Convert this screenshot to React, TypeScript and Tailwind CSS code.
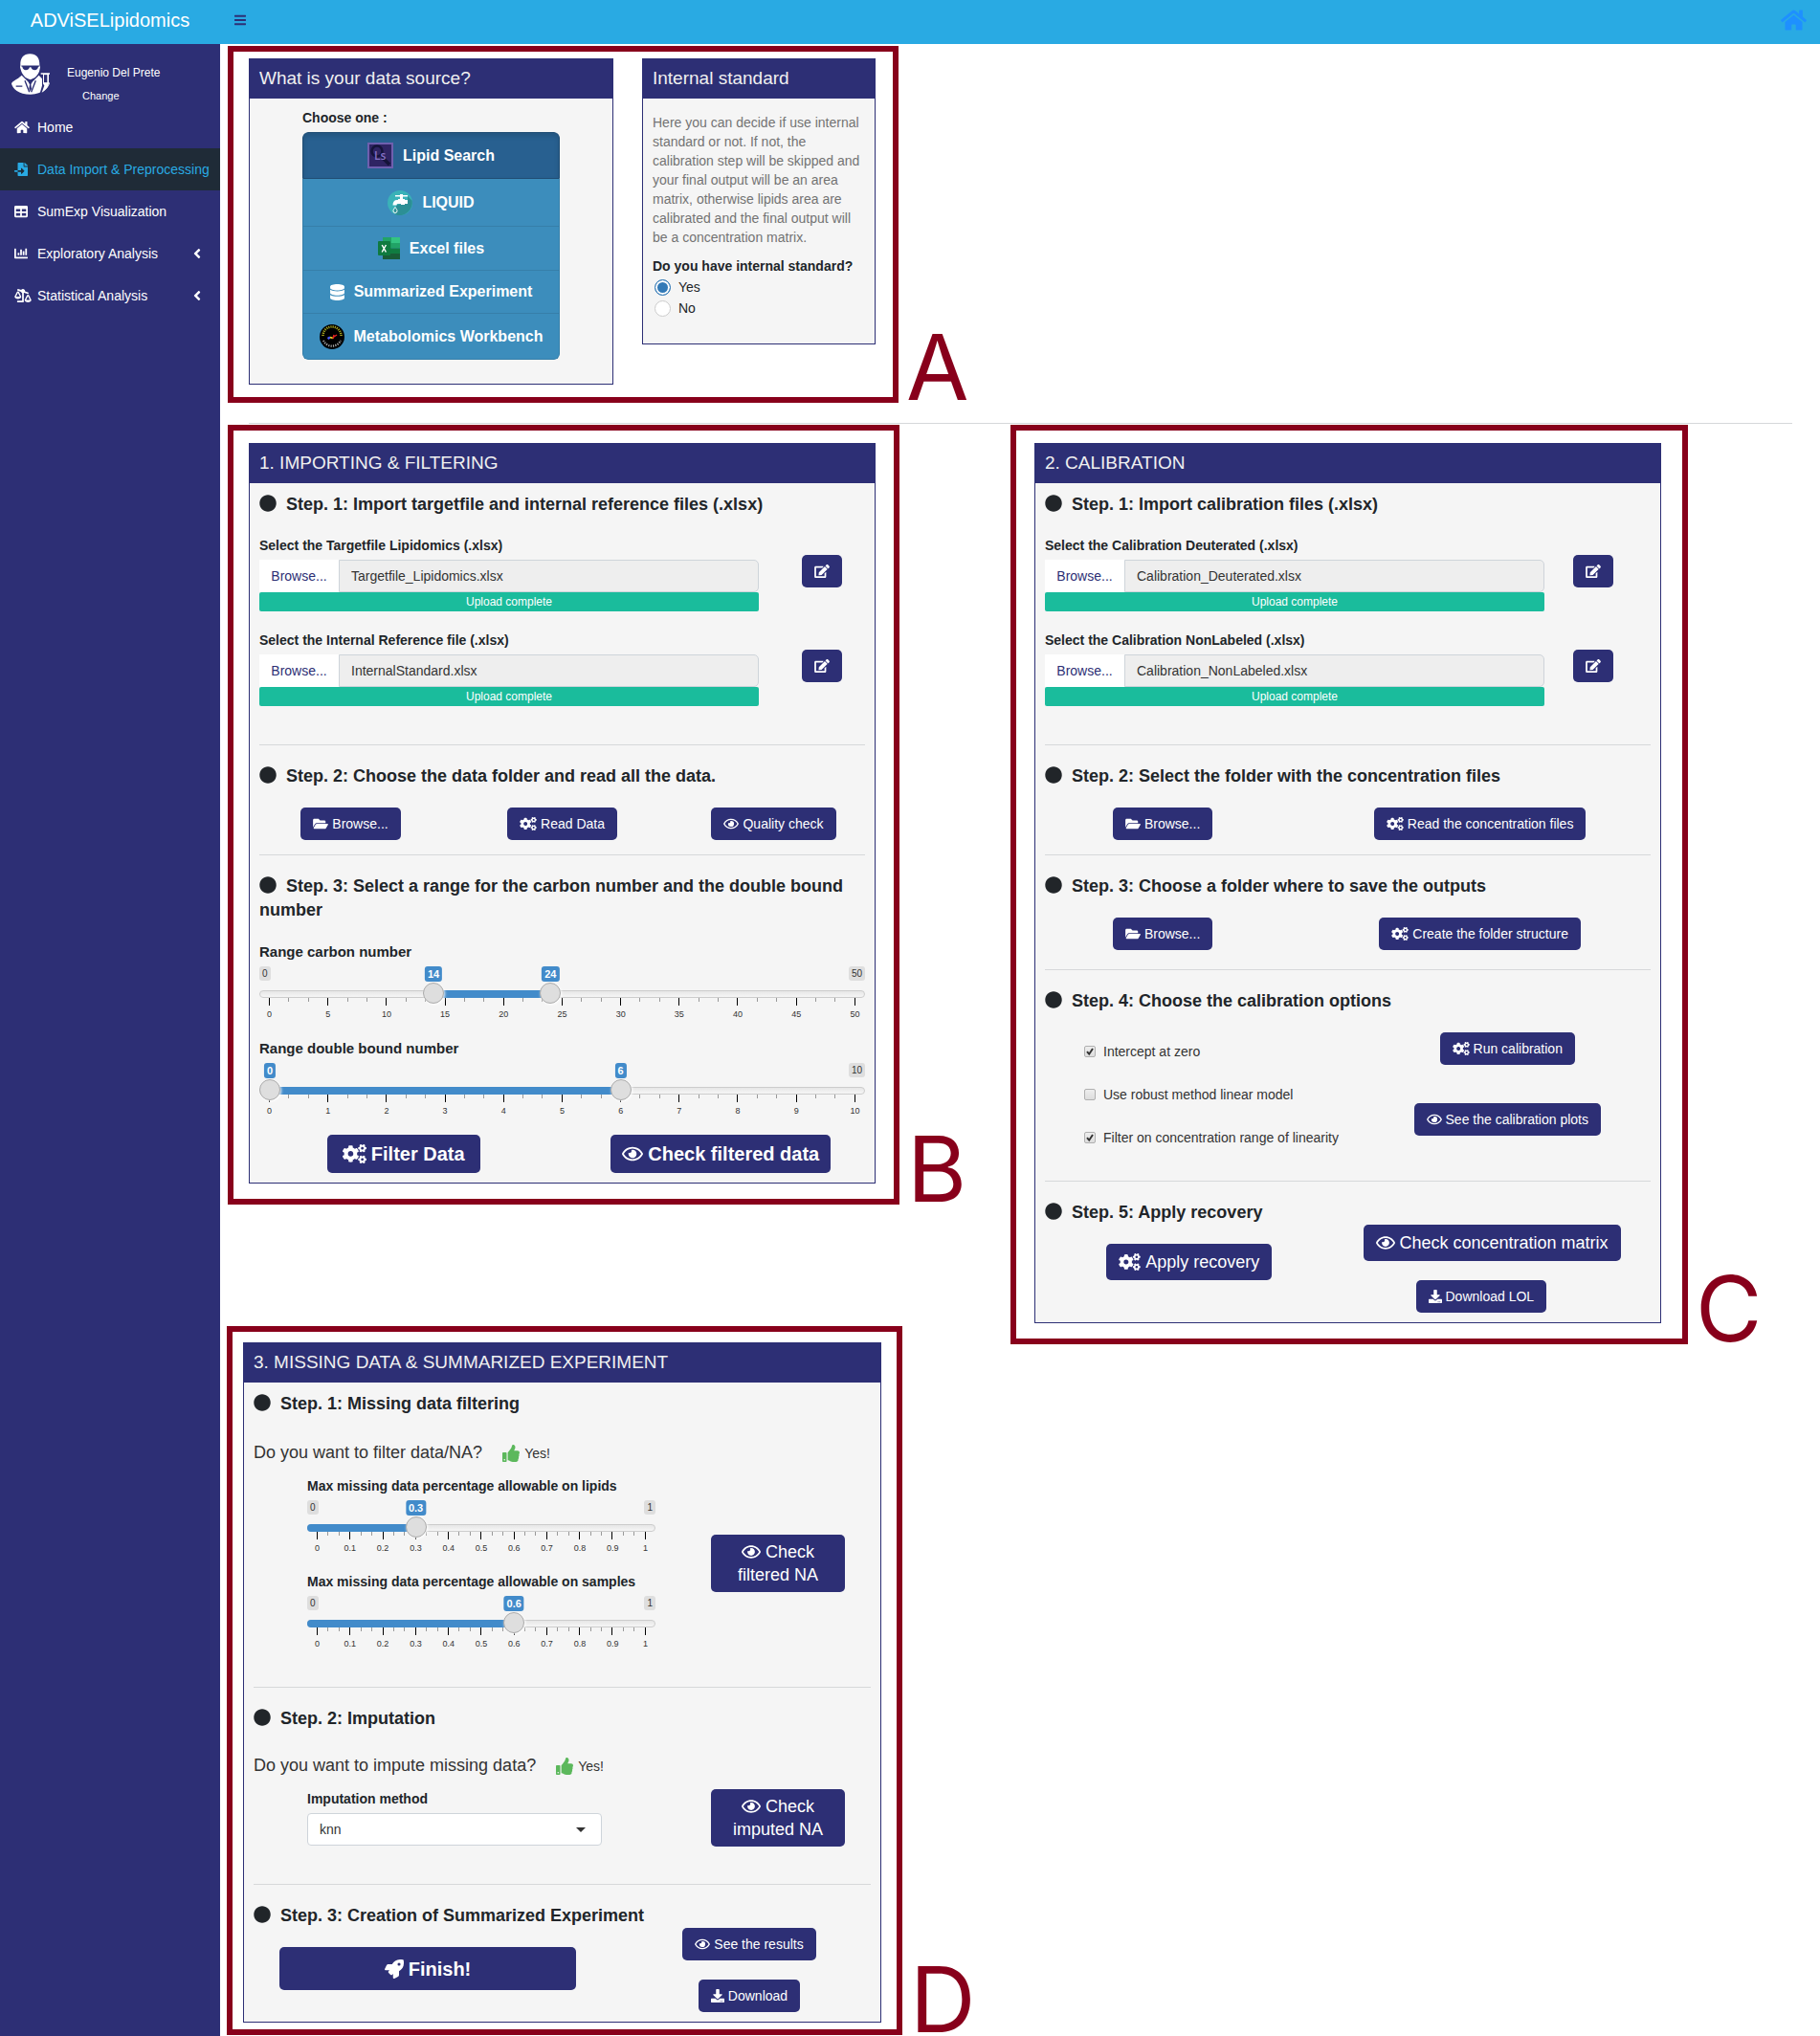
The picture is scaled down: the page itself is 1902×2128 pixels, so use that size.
import React, { useId, useState } from "react";
import {
  FaAngleLeft,
  FaBalanceScaleRight,
  FaBars,
  FaChartBar,
  FaCircle,
  FaCogs,
  FaDatabase,
  FaDownload,
  FaEdit,
  FaFileImport,
  FaFolderOpen,
  FaHome,
  FaRegEye,
  FaRocket,
  FaTable,
  FaThumbsUp,
} from "react-icons/fa";

type Icon = React.ComponentType<{ className?: string }>;

/* ---------- Shell ---------- */

function Avatar() {
  return (
    <svg viewBox="0 0 120 128" className="h-[43px] w-10 shrink-0" aria-hidden="true">
      <path
        fill="#fff"
        d="M28 36C27 12 38 0 58 0s31 12 30 36l2 6-3 14c-4 10-12 22-28 25C43 78 35 66 31 56l-4-14z"
      />
      <path fill="#2d2f75" d="M31 37h56v3l-3 1c-1 7-5 10-11 10s-10-4-12-9h-4c-2 5-6 9-12 9s-10-3-11-10l-3-1z" />
      <path
        fill="#fff"
        d="M32 68l24 24h6l24-24 10 10 24 14c-4 16-22 34-60 36C22 128 3 108 0 94c2-8 18-12 32-26z"
      />
      <path stroke="#2d2f75" strokeWidth="4" fill="none" d="M42 84l14 36M76 84l-14 36M14 102h20" />
      <path fill="#2d2f75" d="M56 84h6l3 5-4 7 2 14-4 8-4-8 2-14-4-7z" />
      <path fill="#2d2f75" d="M89 58h31v9h-3v25c0 12-20 32-28 32l7-24V67h-7z" />
      <path fill="#fff" d="M92 60h28v5h-3v27c0 10-8 22-22 30l8-22-4-6V65h-7z" />
      <path fill="#2d2f75" d="M102 66h10v24h-10z" />
    </svg>
  );
}

function NavItem({
  icon: I,
  iconClass = "size-[14px]",
  label,
  active = false,
  expandable = false,
}: {
  icon: Icon;
  iconClass?: string;
  label: string;
  active?: boolean;
  expandable?: boolean;
}) {
  return (
    <li>
      <a
        href="#"
        aria-current={active ? "page" : undefined}
        className={
          active
            ? "flex h-11 items-center bg-[#1f2b37] pl-[15px] pr-4 text-sm text-[#29aae3]"
            : "flex h-11 items-center pl-[15px] pr-4 text-sm text-white"
        }
      >
        <span className="flex w-6 shrink-0">
          <I className={iconClass} />
        </span>
        <span className="flex-1 whitespace-nowrap">{label}</span>
        {expandable && <FaAngleLeft className="size-4" />}
      </a>
    </li>
  );
}

function Sidebar() {
  return (
    <aside className="w-[230px] shrink-0 bg-[#2d2f75] text-white">
      <div className="flex h-[65px] gap-[18px] pl-3 pt-[10px]">
        <Avatar />
        <div className="flex flex-col items-start pt-[11px]">
          <span className="text-xs leading-[18px]">Eugenio Del Prete</span>
          <a href="#" className="ml-4 mt-[7px] text-[11px] leading-4">
            Change
          </a>
        </div>
      </div>
      <nav>
        <ul>
          <NavItem icon={FaHome} iconClass="h-[14px] w-4" label="Home" />
          <NavItem icon={FaFileImport} label="Data Import & Preprocessing" active />
          <NavItem icon={FaTable} label="SumExp Visualization" />
          <NavItem icon={FaChartBar} label="Exploratory Analysis" expandable />
          <NavItem icon={FaBalanceScaleRight} iconClass="h-[14px] w-[18px]" label="Statistical Analysis" expandable />
        </ul>
      </nav>
    </aside>
  );
}

/* ---------- Building blocks ---------- */

function Box({ title, bodyClass, children }: { title: string; bodyClass: string; children: React.ReactNode }) {
  return (
    <section className="border border-[#2d2f75] bg-[#f5f5f5]">
      <h2 className="-mt-px bg-[#2d2f75] px-[10px] text-[19px] leading-[42px] text-[#f0f0f0]">{title}</h2>
      <div className={bodyClass}>{children}</div>
    </section>
  );
}

function Letter({ children }: { children: string }) {
  return <span className="pl-2 font-['Inter',sans-serif] text-[95px] leading-[75px] text-[#88001b]">{children}</span>;
}

function Step({ children }: { children: string }) {
  return (
    <h3 className="text-lg font-bold leading-[25px]">
      <FaCircle className="mr-[10px] inline-block size-[18px] align-[-2px]" />
      {children}
    </h3>
  );
}

function Rule({ className }: { className: string }) {
  return <hr className={"mb-5 border-0 border-t border-[#d6d8da] " + className} />;
}

const SIZES = {
  sm: { button: "h-[34px] px-[13px] text-sm gap-1", square: "size-[14px]", wide: "h-[14px] w-4", extra: "h-[14px] w-[18px]" },
  md: { button: "h-[38px] px-[13px] text-lg gap-[5px]", square: "size-[18px]", wide: "h-[18px] w-5", extra: "h-[18px] w-[23px]" },
  lg: { button: "h-10 px-3 text-xl font-bold gap-[5px]", square: "size-5", wide: "h-5 w-[22px]", extra: "h-5 w-[25px]" },
  xl: { button: "h-[45px] w-full px-3 text-xl font-bold gap-[5px]", square: "size-5", wide: "h-5 w-[22px]", extra: "h-5 w-[25px]" },
};

function iconShape(icon: Icon) {
  if (icon === FaCogs) return "extra";
  if (icon === FaDownload || icon === FaRocket) return "square";
  return "wide";
}

function Btn({
  icon: I,
  size = "sm",
  className = "",
  label,
  children,
}: {
  icon: Icon;
  size?: keyof typeof SIZES;
  className?: string;
  label?: string;
  children?: React.ReactNode;
}) {
  return (
    <button
      type="button"
      aria-label={label}
      className={
        "inline-flex shrink-0 items-center justify-center whitespace-nowrap rounded-[5px] bg-[#2d2f75] text-white " +
        SIZES[size].button +
        " " +
        className
      }
    >
      <I className={"shrink-0 " + SIZES[size][iconShape(I)]} />
      {children}
    </button>
  );
}

function TallBtn({ first, second }: { first: string; second: string }) {
  return (
    <button
      type="button"
      className="flex h-[60px] w-[140px] shrink-0 flex-col items-center justify-center rounded-[5px] bg-[#2d2f75] text-lg leading-6 text-white"
    >
      <span className="flex items-center gap-[5px]">
        <FaRegEye className="h-[18px] w-5" />
        {first}
      </span>
      <span>{second}</span>
    </button>
  );
}

function FileField({ label, file, gap }: { label: string; file: string; gap: string }) {
  const id = useId();
  return (
    <div className="flex">
      <div className="min-w-0 flex-1">
        <label htmlFor={id} className="mb-[5px] block text-sm font-bold leading-5">
          {label}
        </label>
        <div className="flex h-[34px]">
          <label className="flex w-[83px] shrink-0 cursor-pointer items-center justify-center bg-white text-sm text-[#2d2f75]">
            Browse...
            <input type="file" className="sr-only" />
          </label>
          <input
            id={id}
            type="text"
            readOnly
            value={file}
            className="min-w-0 flex-1 rounded-r-[5px] border border-[#ced4da] bg-[#eee] px-3 text-sm text-[#333]"
          />
        </div>
        <div className="h-5 rounded-[2px] bg-[#1abc9c] text-center text-xs leading-5 text-white">Upload complete</div>
      </div>
      <div className={gap}>
        <Btn icon={FaEdit} label={"Edit " + file} />
      </div>
    </div>
  );
}

const THUMB =
  "pointer-events-none absolute inset-x-0 top-[17px] m-0 h-[22px] w-full appearance-none bg-transparent [&::-webkit-slider-thumb]:pointer-events-auto [&::-webkit-slider-thumb]:size-[22px] [&::-webkit-slider-thumb]:cursor-pointer [&::-webkit-slider-thumb]:appearance-none [&::-webkit-slider-thumb]:rounded-full [&::-webkit-slider-thumb]:border [&::-webkit-slider-thumb]:border-solid [&::-webkit-slider-thumb]:border-[#ababab] [&::-webkit-slider-thumb]:bg-[#dedede] [&::-webkit-slider-thumb]:shadow-[1px_1px_3px_rgba(255,255,255,0.9)]";

function Slider({
  label,
  labelClass = "text-sm",
  max,
  step,
  start,
  ticks,
}: {
  label: string;
  labelClass?: string;
  max: number;
  step: number;
  start: number[];
  ticks: (number | string)[];
}) {
  const [values, setValues] = useState(start);
  const at = (v: number) => `calc(11px + (100% - 22px) * ${v / max})`;
  const double = values.length === 2;
  const low = double ? values[0] : 0;
  const high = values[values.length - 1];
  return (
    <fieldset className="min-w-0">
      <legend className={"mb-[5px] block font-bold leading-5 " + labelClass}>{label}</legend>
      <div className="relative">
        <div className="flex h-[25px] items-start justify-between text-[10px] leading-[15px] text-[#333]">
          <span className={double && low === 0 ? "invisible" : "rounded-[3px] bg-[#dedede] px-[3px]"}>0</span>
          <span className="rounded-[3px] bg-[#dedede] px-[3px]">{max}</span>
        </div>
        <div className="relative h-2 rounded-lg border border-[#ccc] bg-linear-to-b from-[#e6e6e6] to-[#f6f6f6]">
          <div
            className={double ? "absolute -inset-y-px bg-[#428bca]" : "absolute -inset-y-px rounded-l-lg bg-[#428bca]"}
            style={{
              left: double ? at(low) : "-1px",
              right: `calc(11px + (100% - 22px) * ${1 - high / max})`,
            }}
          />
        </div>
        {values.map((v, i) => (
          <React.Fragment key={i}>
            <input
              type="range"
              aria-label={double ? label + (i === 0 ? " minimum" : " maximum") : label}
              min={0}
              max={max}
              step={step}
              value={v}
              onChange={(e) => setValues(values.map((old, j) => (j === i ? Number(e.target.value) : old)))}
              className={THUMB}
            />
            <output
              className="absolute top-0 -translate-x-1/2 rounded-[3px] bg-[#428bca] px-[3px] text-[11px] font-bold leading-4 text-white"
              style={{ left: at(v) }}
            >
              {v}
            </output>
          </React.Fragment>
        ))}
        <div className="flex h-[11px] justify-between px-[10px]">
          {Array.from({ length: 31 }, (_, i) => (
            <span key={i} className={i % 3 === 0 ? "h-2 w-px bg-black" : "h-1 w-px bg-[#999]"} />
          ))}
        </div>
        <div className="flex h-3 justify-between px-[10px] text-[9px] leading-3 text-[#333]">
          {ticks.map((t) => (
            <span key={t} className="flex w-px justify-center">
              {t}
            </span>
          ))}
        </div>
      </div>
    </fieldset>
  );
}

function Question({ text }: { text: string }) {
  return (
    <p className="flex items-center text-lg leading-[25px] text-[#333]">
      {text}
      <FaThumbsUp className="ml-[21px] mr-[5px] size-[18px] text-[#5cb85c]" />
      <span className="text-sm">Yes!</span>
    </p>
  );
}

/* ---------- Data source logos ---------- */

function LipidSearchLogo() {
  return (
    <svg viewBox="0 0 27 27" className="size-[27px]" aria-hidden="true">
      <rect width="27" height="27" fill="#6f5fae" />
      <rect x="2" y="2" width="23" height="23" fill="#2f2463" />
      <circle cx="10" cy="9" r="5.500" fill="none" stroke="#15143a" strokeWidth="2.500" />
      <path d="M15 15l8 8" stroke="#15143a" strokeWidth="3.500" />
      <text x="7" y="18" fontSize="12" fill="#8672c4" fontFamily="Open Sans, sans-serif" fontWeight="600">
        Ls
      </text>
    </svg>
  );
}

function LiquidLogo() {
  return (
    <svg viewBox="0 0 26 26" className="size-[26px]" aria-hidden="true">
      <circle cx="13" cy="13" r="13" fill="#3ab2b8" />
      <path d="M21 6l4.500 4.500A13 13 0 0 1 9 25.400L6 22l4-7 11-2z" fill="#2c8f95" />
      <path
        fill="#fff"
        d="M8 5h5V4h3v1h5v1.500h-5V9h2v1h3v4h-3v1h-4v-1h-3c-1 0-1.500.5-1.500 1.500H5.500C5.500 12 7 10 10 10h1V9h2V6.500H8z"
      />
      <path d="M8 17.500c1.200 1.800 2 2.800 2 4a2 2 0 0 1-4 0c0-1.200.8-2.200 2-4z" fill="none" stroke="#fff" strokeWidth="1" />
    </svg>
  );
}

function ExcelLogo() {
  return (
    <svg viewBox="0 0 23 23" className="size-[23px]" aria-hidden="true">
      <path fill="#21a366" d="M5 0h9v6H5z" />
      <path fill="#33c481" d="M14 0h9v6h-9z" />
      <path fill="#1b9a5d" d="M5 6h9v6H5z" />
      <path fill="#21a366" d="M14 6h9v5.500h-9z" />
      <path fill="#107c41" d="M5 11.500h18V17H5z" />
      <path fill="#185c37" d="M5 17h18v6H5z" />
      <rect y="4" width="13" height="15" rx="1" fill="#0f7a40" />
      <path d="M4.200 8l4.200 7.500M8.400 8l-4.200 7.500" stroke="#fff" strokeWidth="1.500" />
    </svg>
  );
}

function WorkbenchLogo() {
  return (
    <svg viewBox="0 0 26 26" className="size-[26px]" aria-hidden="true">
      <circle cx="13" cy="13" r="13" fill="#000" />
      <path d="M3.500 12a9.500 9.500 0 0 1 19 0" fill="none" stroke="#a8a51e" strokeWidth="2.500" strokeDasharray="1.200 1" />
      <path d="M4 17a10 10 0 0 0 18 0" fill="none" stroke="#aaa" strokeWidth="2.200" strokeDasharray="1.200 1.200" />
      <path d="M8.500 15l2.500-1.500" stroke="#4a5cff" strokeWidth="2.500" />
      <path d="M11 13.500l3 1" stroke="#f3e21a" strokeWidth="1.800" />
      <path d="M14 15l1-4M15 13l3-2" stroke="#e02020" strokeWidth="1.500" />
    </svg>
  );
}

const SOURCES = [
  { name: "Lipid Search", logo: <LipidSearchLogo />, size: "h-[49px]" },
  { name: "LIQUID", logo: <LiquidLogo />, size: "h-[50px]" },
  { name: "Excel files", logo: <ExcelLogo />, size: "h-[46px]" },
  { name: "Summarized Experiment", logo: <FaDatabase className="h-[17px] w-[15px]" />, size: "h-[45px]" },
  { name: "Metabolomics Workbench", logo: <WorkbenchLogo />, size: "h-12" },
];

/* ---------- Panels ---------- */

function SourcePanel() {
  const [source, setSource] = useState("Lipid Search");
  return (
    <Box title="What is your data source?" bodyClass="px-[10px] pb-[25px] pt-[10px]">
      <div className="mx-auto w-[269px] max-w-full" role="group" aria-labelledby="source-label">
        <p id="source-label" className="mb-[5px] text-sm font-bold leading-5">
          Choose one :
        </p>
        <div className="flex flex-col overflow-hidden rounded-md">
          {SOURCES.map((s, i) => (
            <button
              key={s.name}
              type="button"
              aria-pressed={s.name === source}
              onClick={() => setSource(s.name)}
              className={
                "flex items-center justify-center gap-[10px] border-x border-b text-base font-bold text-white " +
                s.size +
                (i === 0 ? " rounded-t-md border-t" : "") +
                (i === SOURCES.length - 1 ? " rounded-b-md" : "") +
                (s.name === source
                  ? " border-[#204d74] bg-[#286090] shadow-[inset_0_3px_5px_rgba(0,0,0,0.125)]"
                  : " border-[#367fa9] bg-[#3c8dbc]")
              }
            >
              {s.logo}
              {s.name}
            </button>
          ))}
        </div>
      </div>
    </Box>
  );
}

function StandardPanel() {
  const [answer, setAnswer] = useState("Yes");
  return (
    <Box title="Internal standard" bodyClass="px-[10px] pb-[26px] pt-[15px] text-sm leading-5">
      <p className="mb-[10px] text-[#737373]">
        Here you can decide if use internal standard or not. If not, the calibration step will be skipped and your
        final output will be an area matrix, otherwise lipids area are calibrated and the final output will be a
        concentration matrix.
      </p>
      <fieldset>
        <legend className="mb-px block font-bold">Do you have internal standard?</legend>
        {["Yes", "No"].map((a) => (
          <label key={a} className="flex h-[22px] items-center gap-2 pl-0.5">
            <input
              type="radio"
              name="standard"
              value={a}
              checked={answer === a}
              onChange={() => setAnswer(a)}
              className="size-[17px] appearance-none rounded-full border border-[#ccc] bg-white checked:border-[#337ab7] checked:bg-[#337ab7] checked:shadow-[inset_0_0_0_2px_#fff]"
            />
            {a}
          </label>
        ))}
      </fieldset>
    </Box>
  );
}

function ImportPanel() {
  return (
    <Box title="1. IMPORTING & FILTERING" bodyClass="p-[10px]">
      <Step>Step. 1: Import targetfile and internal reference files (.xlsx)</Step>
      <div className="mt-5 flex flex-col gap-5">
        <FileField
          label="Select the Targetfile Lipidomics (.xlsx)"
          file="Targetfile_Lipidomics.xlsx"
          gap="pl-[45px] pr-6 pt-5"
        />
        <FileField
          label="Select the Internal Reference file (.xlsx)"
          file="InternalStandard.xlsx"
          gap="pl-[45px] pr-6 pt-5"
        />
      </div>
      <Rule className="mt-10" />
      <Step>Step. 2: Choose the data folder and read all the data.</Step>
      <div className="-mx-[15px] mt-5 grid grid-cols-3 justify-items-center">
        <Btn icon={FaFolderOpen}>Browse...</Btn>
        <Btn icon={FaCogs}>Read Data</Btn>
        <Btn icon={FaRegEye}>Quality check</Btn>
      </div>
      <Rule className="mt-[15px]" />
      <Step>Step. 3: Select a range for the carbon number and the double bound number</Step>
      <div className="mt-[21px] flex flex-col gap-5">
        <Slider
          label="Range carbon number"
          labelClass="text-[15px]"
          max={50}
          step={1}
          start={[14, 24]}
          ticks={[0, 5, 10, 15, 20, 25, 30, 35, 40, 45, 50]}
        />
        <Slider
          label="Range double bound number"
          labelClass="text-[15px]"
          max={10}
          step={1}
          start={[0, 6]}
          ticks={[0, 1, 2, 3, 4, 5, 6, 7, 8, 9, 10]}
        />
      </div>
      <div className="-mx-[15px] mt-[19px] grid grid-cols-2 justify-items-center">
        <Btn icon={FaCogs} size="lg" className="w-40">
          Filter Data
        </Btn>
        <Btn icon={FaRegEye} size="lg">
          Check filtered data
        </Btn>
      </div>
    </Box>
  );
}

function Check({ label, on = false }: { label: string; on?: boolean }) {
  const [checked, setChecked] = useState(on);
  return (
    <label className="flex items-center gap-2 text-sm leading-5 text-[#333]">
      <span className="grid">
        <input
          type="checkbox"
          checked={checked}
          onChange={() => setChecked(!checked)}
          className="col-start-1 row-start-1 size-3 appearance-none rounded-[2px] border border-[#b0b0b0] bg-linear-to-b from-[#eee] to-[#ddd]"
        />
        {checked && (
          <svg viewBox="0 0 12 12" className="pointer-events-none col-start-1 row-start-1 size-3" aria-hidden="true">
            <path d="M3 6.200l2.200 2.500L9 3" fill="none" stroke="#333" strokeWidth="2" />
          </svg>
        )}
      </span>
      {label}
    </label>
  );
}

function CalibrationPanel() {
  return (
    <Box title="2. CALIBRATION" bodyClass="p-[10px]">
      <Step>Step. 1: Import calibration files (.xlsx)</Step>
      <div className="mt-5 flex flex-col gap-5">
        <FileField
          label="Select the Calibration Deuterated (.xlsx)"
          file="Calibration_Deuterated.xlsx"
          gap="pl-[30px] pr-[39px] pt-5"
        />
        <FileField
          label="Select the Calibration NonLabeled (.xlsx)"
          file="Calibration_NonLabeled.xlsx"
          gap="pl-[30px] pr-[39px] pt-5"
        />
      </div>
      <Rule className="mt-10" />
      <Step>Step. 2: Select the folder with the concentration files</Step>
      <div className="-mx-[15px] mt-5 grid grid-cols-[5fr_7fr] justify-items-center">
        <Btn icon={FaFolderOpen}>Browse...</Btn>
        <Btn icon={FaCogs}>Read the concentration files</Btn>
      </div>
      <Rule className="mt-[15px]" />
      <Step>Step. 3: Choose a folder where to save the outputs</Step>
      <div className="-mx-[15px] mt-5 grid grid-cols-[5fr_7fr] justify-items-center">
        <Btn icon={FaFolderOpen}>Browse...</Btn>
        <Btn icon={FaCogs}>Create the folder structure</Btn>
      </div>
      <Rule className="mt-5" />
      <Step>Step. 4: Choose the calibration options</Step>
      <div className="-mx-[15px] mt-5 grid grid-cols-2">
        <div className="flex flex-col gap-[25px] pl-14 pt-[10px]">
          <Check label="Intercept at zero" on />
          <Check label="Use robust method linear model" />
          <Check label="Filter on concentration range of linearity" on />
        </div>
        <div className="flex flex-col items-center gap-10 pl-0.5">
          <Btn icon={FaCogs}>Run calibration</Btn>
          <Btn icon={FaRegEye}>See the calibration plots</Btn>
        </div>
      </div>
      <Rule className="mt-[35px]" />
      <Step>Step. 5: Apply recovery</Step>
      <div className="-mx-[15px] grid grid-cols-2">
        <div className="flex items-start justify-center pt-5">
          <Btn icon={FaCogs} size="md">
            Apply recovery
          </Btn>
        </div>
        <div className="flex flex-col items-start gap-5 pl-4">
          <Btn icon={FaRegEye} size="md">
            Check concentration matrix
          </Btn>
          <Btn icon={FaDownload} className="ml-[55px]">
            Download LOL
          </Btn>
        </div>
      </div>
    </Box>
  );
}

const TENTHS = ["0", "0.1", "0.2", "0.3", "0.4", "0.5", "0.6", "0.7", "0.8", "0.9", "1"];

function MissingPanel() {
  return (
    <Box title="3. MISSING DATA & SUMMARIZED EXPERIMENT" bodyClass="p-[10px]">
      <Step>Step. 1: Missing data filtering</Step>
      <div className="mt-[26px]">
        <Question text="Do you want to filter data/NA?" />
      </div>
      <div className="mt-3 flex items-center gap-[58px] pl-14 pr-[27px]">
        <div className="flex min-w-0 flex-1 flex-col gap-[19px]">
          <Slider
            label="Max missing data percentage allowable on lipids"
            max={1}
            step={0.1}
            start={[0.3]}
            ticks={TENTHS}
          />
          <Slider
            label="Max missing data percentage allowable on samples"
            max={1}
            step={0.1}
            start={[0.6]}
            ticks={TENTHS}
          />
        </div>
        <TallBtn first="Check" second="filtered NA" />
      </div>
      <Rule className="mt-[39px]" />
      <Step>Step. 2: Imputation</Step>
      <div className="mt-6">
        <Question text="Do you want to impute missing data?" />
      </div>
      <div className="mt-3 flex items-start justify-between pl-14 pr-[27px]">
        <div>
          <label htmlFor="method" className="mb-[5px] block text-sm font-bold leading-5">
            Imputation method
          </label>
          <div className="grid items-center">
            <select
              id="method"
              className="col-start-1 row-start-1 h-[34px] w-[308px] appearance-none rounded border border-[#ced4da] bg-white px-3 text-sm text-[#333]"
            >
              <option>knn</option>
            </select>
            <span className="pointer-events-none col-start-1 row-start-1 mr-[17px] justify-self-end border-x-[5px] border-t-[5px] border-x-transparent border-t-[#333]" />
          </div>
        </div>
        <TallBtn first="Check" second="imputed NA" />
      </div>
      <Rule className="mt-[39px]" />
      <Step>Step. 3: Creation of Summarized Experiment</Step>
      <div className="grid grid-cols-[310fr_308fr] pl-[27px]">
        <div className="pt-5">
          <Btn icon={FaRocket} size="xl">
            Finish!
          </Btn>
        </div>
        <div className="flex flex-col items-center gap-5 pl-[54px]">
          <Btn icon={FaRegEye}>See the results</Btn>
          <Btn icon={FaDownload}>Download</Btn>
        </div>
      </div>
    </Box>
  );
}

export default function App() {
  return (
    <div className="flex min-h-screen flex-col bg-white font-['Liberation_Sans',Arial,sans-serif] text-[#212529]">
      <header className="flex h-[46px] items-center bg-[#29aae3] pb-1">
        <h1 className="w-[230px] text-center text-xl text-white">ADViSELipidomics</h1>
        <button type="button" aria-label="Toggle sidebar" className="ml-[15px] text-[#2d2f75]">
          <FaBars className="h-[14px] w-3" />
        </button>
        <a href="#" aria-label="Home" className="ml-auto mr-[14px] text-[#1e90ff]">
          <FaHome className="h-6 w-[27px]" />
        </a>
      </header>
      <div className="flex flex-1">
        <Sidebar />
        <main className="min-w-0 flex-1 pb-px pl-[7px] pt-0.5">
          <div className="grid grid-cols-[701fr_963fr] items-end pl-px">
            <div className="grid grid-cols-[381fr_244fr] items-start gap-[30px] border-[6px] border-[#88001b] pb-[13px] pl-4 pr-[18px] pt-[7px]">
              <SourcePanel />
              <StandardPanel />
            </div>
            <Letter>A</Letter>
          </div>
          <hr className="mb-px ml-[23px] mr-[29px] mt-[21px] border-0 border-t border-[#d6d8da]" />
          <div className="grid grid-cols-[819fr_846fr] items-start">
            <div className="flex flex-col gap-[127px]">
              <div className="grid grid-cols-[702fr_116fr] items-end pl-px">
                <div className="border-[6px] border-[#88001b] pb-4 pl-4 pr-[19px] pt-[13px]">
                  <ImportPanel />
                </div>
                <Letter>B</Letter>
              </div>
              <div className="grid grid-cols-[706fr_113fr] items-end">
                <div className="border-[6px] border-[#88001b] pb-[7px] pl-[11px] pr-4 pt-[11px]">
                  <MissingPanel />
                </div>
                <Letter>D</Letter>
              </div>
            </div>
            <div className="grid grid-cols-[708fr_138fr] items-end">
              <div className="border-[6px] border-[#88001b] pb-4 pl-[19px] pr-[22px] pt-[13px]">
                <CalibrationPanel />
              </div>
              <Letter>C</Letter>
            </div>
          </div>
        </main>
      </div>
    </div>
  );
}
